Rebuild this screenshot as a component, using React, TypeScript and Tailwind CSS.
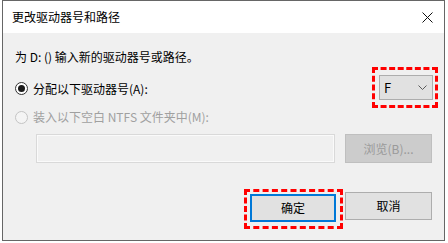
import React from 'react';

const font = { fontFamily: '"Microsoft YaHei", "Noto Sans CJK SC", "Noto Sans", sans-serif' };

function Radio({ checked, disabled }: { checked?: boolean; disabled?: boolean }) {
  return (
    <span
      className={
        'flex h-[13px] w-[13px] items-center justify-center rounded-full border ' +
        (disabled ? 'border-[#c4c4c4] bg-[#f4f4f4]' : 'border-[#333333] bg-white')
      }
    >
      {checked && <span className="h-[7px] w-[7px] rounded-full bg-[#1a1a1a]" />}
    </span>
  );
}

export default function App() {
  return (
    <div className="h-[243px] w-[448px] bg-white text-[12px] text-black" style={font}>
      <div className="ml-[2px] flex h-[241px] w-[443px] flex-col border border-[#666666]">
        {/* title bar */}
        <div className="flex h-[32px] items-center justify-between bg-white pl-[9px] pr-[10px]">
          <span className="text-[12px] leading-none">更改驱动器号和路径</span>
          <svg width="11" height="11" viewBox="0 0 11 11" className="mr-[1px]">
            <path d="M0.5 0.5 L10.5 10.5 M10.5 0.5 L0.5 10.5" stroke="#111" strokeWidth="1" />
          </svg>
        </div>

        {/* body */}
        <div className="flex flex-1 flex-col bg-[#f0f0f0] pl-[12px] pr-[6px]">
          <p className="mt-[16px] h-[16px] leading-[16px]">为 D: () 输入新的驱动器号或路径。</p>

          <div className="mt-[2px] flex h-[41px] items-center justify-between">
            <label className="flex items-center gap-[5px] pt-[2px]">
              <Radio checked />
              <span className="leading-[16px]">分配以下驱动器号(A):</span>
            </label>
            <div className="flex h-[41px] w-[66px] items-center border-[3px] border-dashed border-[#ff0000] pl-[4px]">
              <div className="flex h-[25px] w-[54px] items-center justify-between border border-[#adadad] bg-[#e1e1e1] pl-[4px] pr-[5px]">
                <span className="text-[13px] leading-none">F</span>
                <svg width="9" height="5" viewBox="0 0 9 5">
                  <path d="M0.5 0.5 L4.5 4.5 L8.5 0.5" fill="none" stroke="#5a5a5a" strokeWidth="1" />
                </svg>
              </div>
            </div>
          </div>

          <label className="mt-[1px] flex h-[16px] items-center gap-[5px] text-[#a0a0a0]">
            <Radio disabled />
            <span className="leading-[16px]">装入以下空白 NTFS 文件夹中(M):</span>
          </label>

          <div className="mr-[6px] mt-[9px] flex items-center justify-between pl-[21px]">
            <div className="h-[29px] w-[299px] border border-[#d9d9d9] bg-[#f0f0f0] shadow-[inset_0_0_0_1px_#fafafa]" />
            <button className="flex h-[29px] w-[87px] items-center justify-center border border-[#bfbfbf] bg-[#cccccc] text-[#9a9a9a]">
              浏览(B)...
            </button>
          </div>

          <div className="mr-[6px] mt-[26px] flex items-center justify-end gap-[2px]">
            <div className="flex h-[40px] w-[99px] items-start border-[3px] border-dashed border-[#ff0000] pl-[3px] pt-[2px]">
              <button className="flex h-[28px] w-[86px] items-center justify-center border-2 border-[#0078d7] bg-[#e1e1e1]">
                确定
              </button>
            </div>
            <button className="-mt-[7px] flex h-[28px] w-[87px] items-center justify-center border border-[#adadad] bg-[#e1e1e1]">
              取消
            </button>
          </div>
        </div>
      </div>
    </div>
  );
}
